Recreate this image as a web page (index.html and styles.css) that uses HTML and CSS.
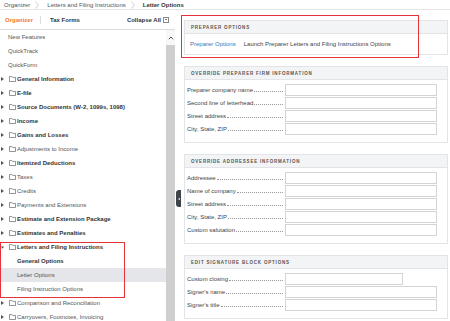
FILE: index.html
```html
<!DOCTYPE html>
<html lang="en">
<head>
  <meta charset="UTF-8" />
  <title>Letter Options</title>
  <link rel="stylesheet" href="styles.css">
</head>
<body>

  <div class="crumbs">
    <span>Organizer</span>
    <svg class="chev" viewBox="0 0 4 8"><path d="M0.5 0.5 L3.5 4 L0.5 7.5"/></svg>
    <span>Letters and Filing Instructions</span>
    <svg class="chev" viewBox="0 0 4 8"><path d="M0.5 0.5 L3.5 4 L0.5 7.5"/></svg>
    <span class="current">Letter Options</span>
  </div>

  <div class="app">
    <div class="sidebar">
      <div class="side-head">
        <span class="tab active">Organizer</span>
        <span class="tab">Tax Forms</span>
        <span class="collapse">Collapse All <span class="minus-box"></span></span>
      </div>

      <div class="side-body">
        <div class="tree">
          <div class="leaf">New Features</div>
          <div class="leaf">QuickTrack</div>
          <div class="leaf">QuickForm</div>

          <div class="node bold"><svg class="caret" viewBox="0 0 3 4"><path d="M0 0 L3 2 L0 4z"/></svg><svg class="folder" viewBox="0 0 7 6"><path d="M0.5 0.5h2.3l0.7 0.9h3v4.1h-6z"/></svg>General Information</div>
          <div class="node bold"><svg class="caret" viewBox="0 0 3 4"><path d="M0 0 L3 2 L0 4z"/></svg><svg class="folder" viewBox="0 0 7 6"><path d="M0.5 0.5h2.3l0.7 0.9h3v4.1h-6z"/></svg>E-file</div>
          <div class="node bold"><svg class="caret" viewBox="0 0 3 4"><path d="M0 0 L3 2 L0 4z"/></svg><svg class="folder" viewBox="0 0 7 6"><path d="M0.5 0.5h2.3l0.7 0.9h3v4.1h-6z"/></svg>Source Documents (W-2, 1099s, 1098)</div>
          <div class="node bold"><svg class="caret" viewBox="0 0 3 4"><path d="M0 0 L3 2 L0 4z"/></svg><svg class="folder" viewBox="0 0 7 6"><path d="M0.5 0.5h2.3l0.7 0.9h3v4.1h-6z"/></svg>Income</div>
          <div class="node bold"><svg class="caret" viewBox="0 0 3 4"><path d="M0 0 L3 2 L0 4z"/></svg><svg class="folder" viewBox="0 0 7 6"><path d="M0.5 0.5h2.3l0.7 0.9h3v4.1h-6z"/></svg>Gains and Losses</div>
          <div class="node"><svg class="caret" viewBox="0 0 3 4"><path d="M0 0 L3 2 L0 4z"/></svg><svg class="folder" viewBox="0 0 7 6"><path d="M0.5 0.5h2.3l0.7 0.9h3v4.1h-6z"/></svg>Adjustments to Income</div>
          <div class="node bold"><svg class="caret" viewBox="0 0 3 4"><path d="M0 0 L3 2 L0 4z"/></svg><svg class="folder" viewBox="0 0 7 6"><path d="M0.5 0.5h2.3l0.7 0.9h3v4.1h-6z"/></svg>Itemized Deductions</div>
          <div class="node"><svg class="caret" viewBox="0 0 3 4"><path d="M0 0 L3 2 L0 4z"/></svg><svg class="folder" viewBox="0 0 7 6"><path d="M0.5 0.5h2.3l0.7 0.9h3v4.1h-6z"/></svg>Taxes</div>
          <div class="node"><svg class="caret" viewBox="0 0 3 4"><path d="M0 0 L3 2 L0 4z"/></svg><svg class="folder" viewBox="0 0 7 6"><path d="M0.5 0.5h2.3l0.7 0.9h3v4.1h-6z"/></svg>Credits</div>
          <div class="node"><svg class="caret" viewBox="0 0 3 4"><path d="M0 0 L3 2 L0 4z"/></svg><svg class="folder" viewBox="0 0 7 6"><path d="M0.5 0.5h2.3l0.7 0.9h3v4.1h-6z"/></svg>Payments and Extensions</div>
          <div class="node bold"><svg class="caret" viewBox="0 0 3 4"><path d="M0 0 L3 2 L0 4z"/></svg><svg class="folder" viewBox="0 0 7 6"><path d="M0.5 0.5h2.3l0.7 0.9h3v4.1h-6z"/></svg>Estimate and Extension Package</div>
          <div class="node bold"><svg class="caret" viewBox="0 0 3 4"><path d="M0 0 L3 2 L0 4z"/></svg><svg class="folder" viewBox="0 0 7 6"><path d="M0.5 0.5h2.3l0.7 0.9h3v4.1h-6z"/></svg>Estimates and Penalties</div>

          <div class="group marked">
            <div class="node bold"><svg class="caret open" viewBox="0 0 4 3"><path d="M0 0 L4 0 L2 3z"/></svg><svg class="folder" viewBox="0 0 7 6"><path d="M0.5 0.5h2.3l0.7 0.9h3v4.1h-6z"/></svg>Letters and Filing Instructions</div>
            <div class="sub bold">General Options</div>
            <div class="sub selected">Letter Options</div>
            <div class="sub">Filing Instruction Options</div>
          </div>

          <div class="node"><svg class="caret" viewBox="0 0 3 4"><path d="M0 0 L3 2 L0 4z"/></svg><svg class="folder" viewBox="0 0 7 6"><path d="M0.5 0.5h2.3l0.7 0.9h3v4.1h-6z"/></svg>Comparison and Reconciliation</div>
          <div class="node"><svg class="caret" viewBox="0 0 3 4"><path d="M0 0 L3 2 L0 4z"/></svg><svg class="folder" viewBox="0 0 7 6"><path d="M0.5 0.5h2.3l0.7 0.9h3v4.1h-6z"/></svg>Carryovers, Footnotes, Invoicing</div>
        </div>

        <div class="scroll">
          <div class="scroll-up"><svg viewBox="0 0 6 4"><path d="M0.8 3.2 L3 1 L5.2 3.2"/></svg></div>
          <div class="scroll-thumb"></div>
        </div>
      </div>
    </div>

    <div class="main">
      <div class="handle"><span class="handle-arrow"></span></div>

      <section class="panel marked">
        <div class="panel-head">Preparer Options</div>
        <div class="option-row">
          <a class="link">Preparer Options</a>
          <span>Launch Preparer Letters and Filing Instructions Options</span>
        </div>
      </section>

      <section class="panel">
        <div class="panel-head">Override Preparer Firm Information</div>
        <div class="panel-body">
          <div class="field"><label>Preparer company name</label><input type="text"></div>
          <div class="field"><label>Second line of letterhead</label><input type="text"></div>
          <div class="field"><label>Street address</label><input type="text"></div>
          <div class="field"><label>City, State, ZIP</label><input type="text"></div>
        </div>
      </section>

      <section class="panel">
        <div class="panel-head">Override Addressee Information</div>
        <div class="panel-body">
          <div class="field"><label>Addressee</label><input type="text"></div>
          <div class="field"><label>Name of company</label><input type="text"></div>
          <div class="field"><label>Street address</label><input type="text"></div>
          <div class="field"><label>City, State, ZIP</label><input type="text"></div>
          <div class="field"><label>Custom salutation</label><input type="text"></div>
        </div>
      </section>

      <section class="panel">
        <div class="panel-head">Edit Signature Block Options</div>
        <div class="panel-body">
          <div class="field"><label>Custom closing</label><input type="text" class="short"></div>
          <div class="field"><label>Signer's name</label><input type="text"></div>
          <div class="field"><label>Signer's title</label><input type="text"></div>
        </div>
      </section>
    </div>
  </div>

</body>
</html>
```

FILE: styles.css
```css
:root {
  --text: #444;
  --text-strong: #333;
  --line: #e2e4e7;
  --head-bg: #f3f4f6;
  --orange: #f47b20;
  --link: #2b7bb9;
  --mark: #e8323a;
}

* {
  box-sizing: border-box;
}

body {
  margin: 0;
  width: 450px;
  height: 321px;
  overflow: hidden;
  font-family: 'Liberation Sans', Arial, sans-serif;
  font-size: 6px;
  color: var(--text);
  background: #fff;
}

/* breadcrumb */
.crumbs {
  height: 10px;
  display: flex;
  align-items: center;
  padding-left: 4px;
  border-bottom: 1px solid #e6e6e6;
  color: #555;
}

.crumbs .current {
  font-weight: bold;
  color: var(--text-strong);
}

.chev {
  width: 4px;
  height: 8px;
  margin: 0 8px 0 5px;
  fill: none;
  stroke: #bbb;
  stroke-width: 0.7;
}

.app {
  display: flex;
  height: 311px;
}

/* sidebar */
.sidebar {
  width: 175px;
  display: flex;
  flex-direction: column;
}

.side-head {
  height: 20px;
  display: flex;
  align-items: center;
  border-bottom: 1px solid #dcdcdc;
  font-weight: bold;
  color: var(--text-strong);
}

.tab {
  padding: 0 0 0 9px;
}

.tab.active {
  color: var(--orange);
  padding: 1px 7px 1px 5px;
  border-right: 1px solid #ddd;
}

.collapse {
  margin-left: auto;
  margin-right: 6px;
  display: flex;
  align-items: center;
  gap: 2px;
}

.minus-box {
  width: 6px;
  height: 6px;
  border: 1px solid #888;
  position: relative;
}

.minus-box::after {
  content: "";
  position: absolute;
  left: 1px;
  right: 1px;
  top: 1.5px;
  height: 0.8px;
  background: #777;
}

.side-body {
  flex: 1;
  display: flex;
  overflow: hidden;
}

.tree {
  width: 166px;
}

.leaf, .node, .sub {
  height: 14px;
  display: flex;
  align-items: center;
  white-space: nowrap;
  color: #555;
}

.leaf {
  padding-left: 8px;
}

.node {
  padding-left: 1px;
}

.sub {
  padding-left: 17px;
}

.bold {
  font-weight: bold;
  color: var(--text-strong);
}

.caret {
  width: 3px;
  height: 4px;
  margin-right: 5px;
  fill: #555;
}

.caret.open {
  height: 3px;
}

.folder {
  width: 7px;
  height: 6px;
  margin-right: 1px;
  fill: none;
  stroke: #666;
  stroke-width: 0.7;
}

.sub.selected {
  background: #e4e6ea;
}

.group {
  position: relative;
}

.group.marked::after {
  content: "";
  position: absolute;
  top: 2px;
  left: 0;
  width: 123px;
  height: 54px;
  border: 1.5px solid var(--mark);
}

.scroll {
  width: 9px;
  display: flex;
  flex-direction: column;
}

.scroll-up {
  height: 15px;
  display: flex;
  align-items: center;
  justify-content: center;
  background: #f7f7f7;
}

.scroll-up svg {
  width: 6px;
  height: 4px;
  fill: none;
  stroke: #555;
  stroke-width: 1;
}

.scroll-thumb {
  flex: 1;
  background: #cfcfcf;
}

/* main */
.main {
  flex: 1;
  position: relative;
  padding: 10px 2px 0 9px;
}

.handle {
  position: absolute;
  left: 1px;
  top: 180px;
  width: 5px;
  height: 17px;
  background: #3f444a;
  border-radius: 3px 0 0 3px;
  display: flex;
  align-items: center;
  justify-content: center;
}

.handle-arrow {
  width: 0;
  height: 0;
  border-top: 1.5px solid transparent;
  border-bottom: 1.5px solid transparent;
  border-right: 2px solid #fff;
}

.panel {
  position: relative;
  border: 1px solid var(--line);
  margin-bottom: 11px;
}

.panel.marked::after {
  content: "";
  position: absolute;
  top: -6px;
  left: -4px;
  width: 236px;
  height: 41px;
  border: 1.5px solid var(--mark);
}

.panel-head {
  height: 13px;
  display: flex;
  align-items: center;
  padding-left: 6px;
  background: var(--head-bg);
  border-bottom: 1px solid var(--line);
  font-size: 4.5px;
  font-weight: bold;
  letter-spacing: 0.8px;
  text-transform: uppercase;
  color: #555;
}

.option-row {
  height: 20px;
  display: flex;
  align-items: center;
  padding-left: 5px;
  gap: 8px;
}

.link {
  color: var(--link);
}

.panel-body {
  padding: 3px 0 7px 2px;
}

.field {
  height: 13px;
  display: flex;
  align-items: center;
}

.field label {
  width: 96px;
  display: flex;
  align-items: baseline;
  white-space: nowrap;
  color: var(--text);
}

.field label::after {
  content: "";
  flex: 1;
  border-bottom: 1px dotted #999;
  margin-left: 1px;
}

.field input {
  width: 152px;
  height: 12px;
  margin-left: 2px;
  border: 1px solid #d2d4d7;
  padding: 0;
  background: #fff;
}

.field input.short {
  width: 118px;
}
```
